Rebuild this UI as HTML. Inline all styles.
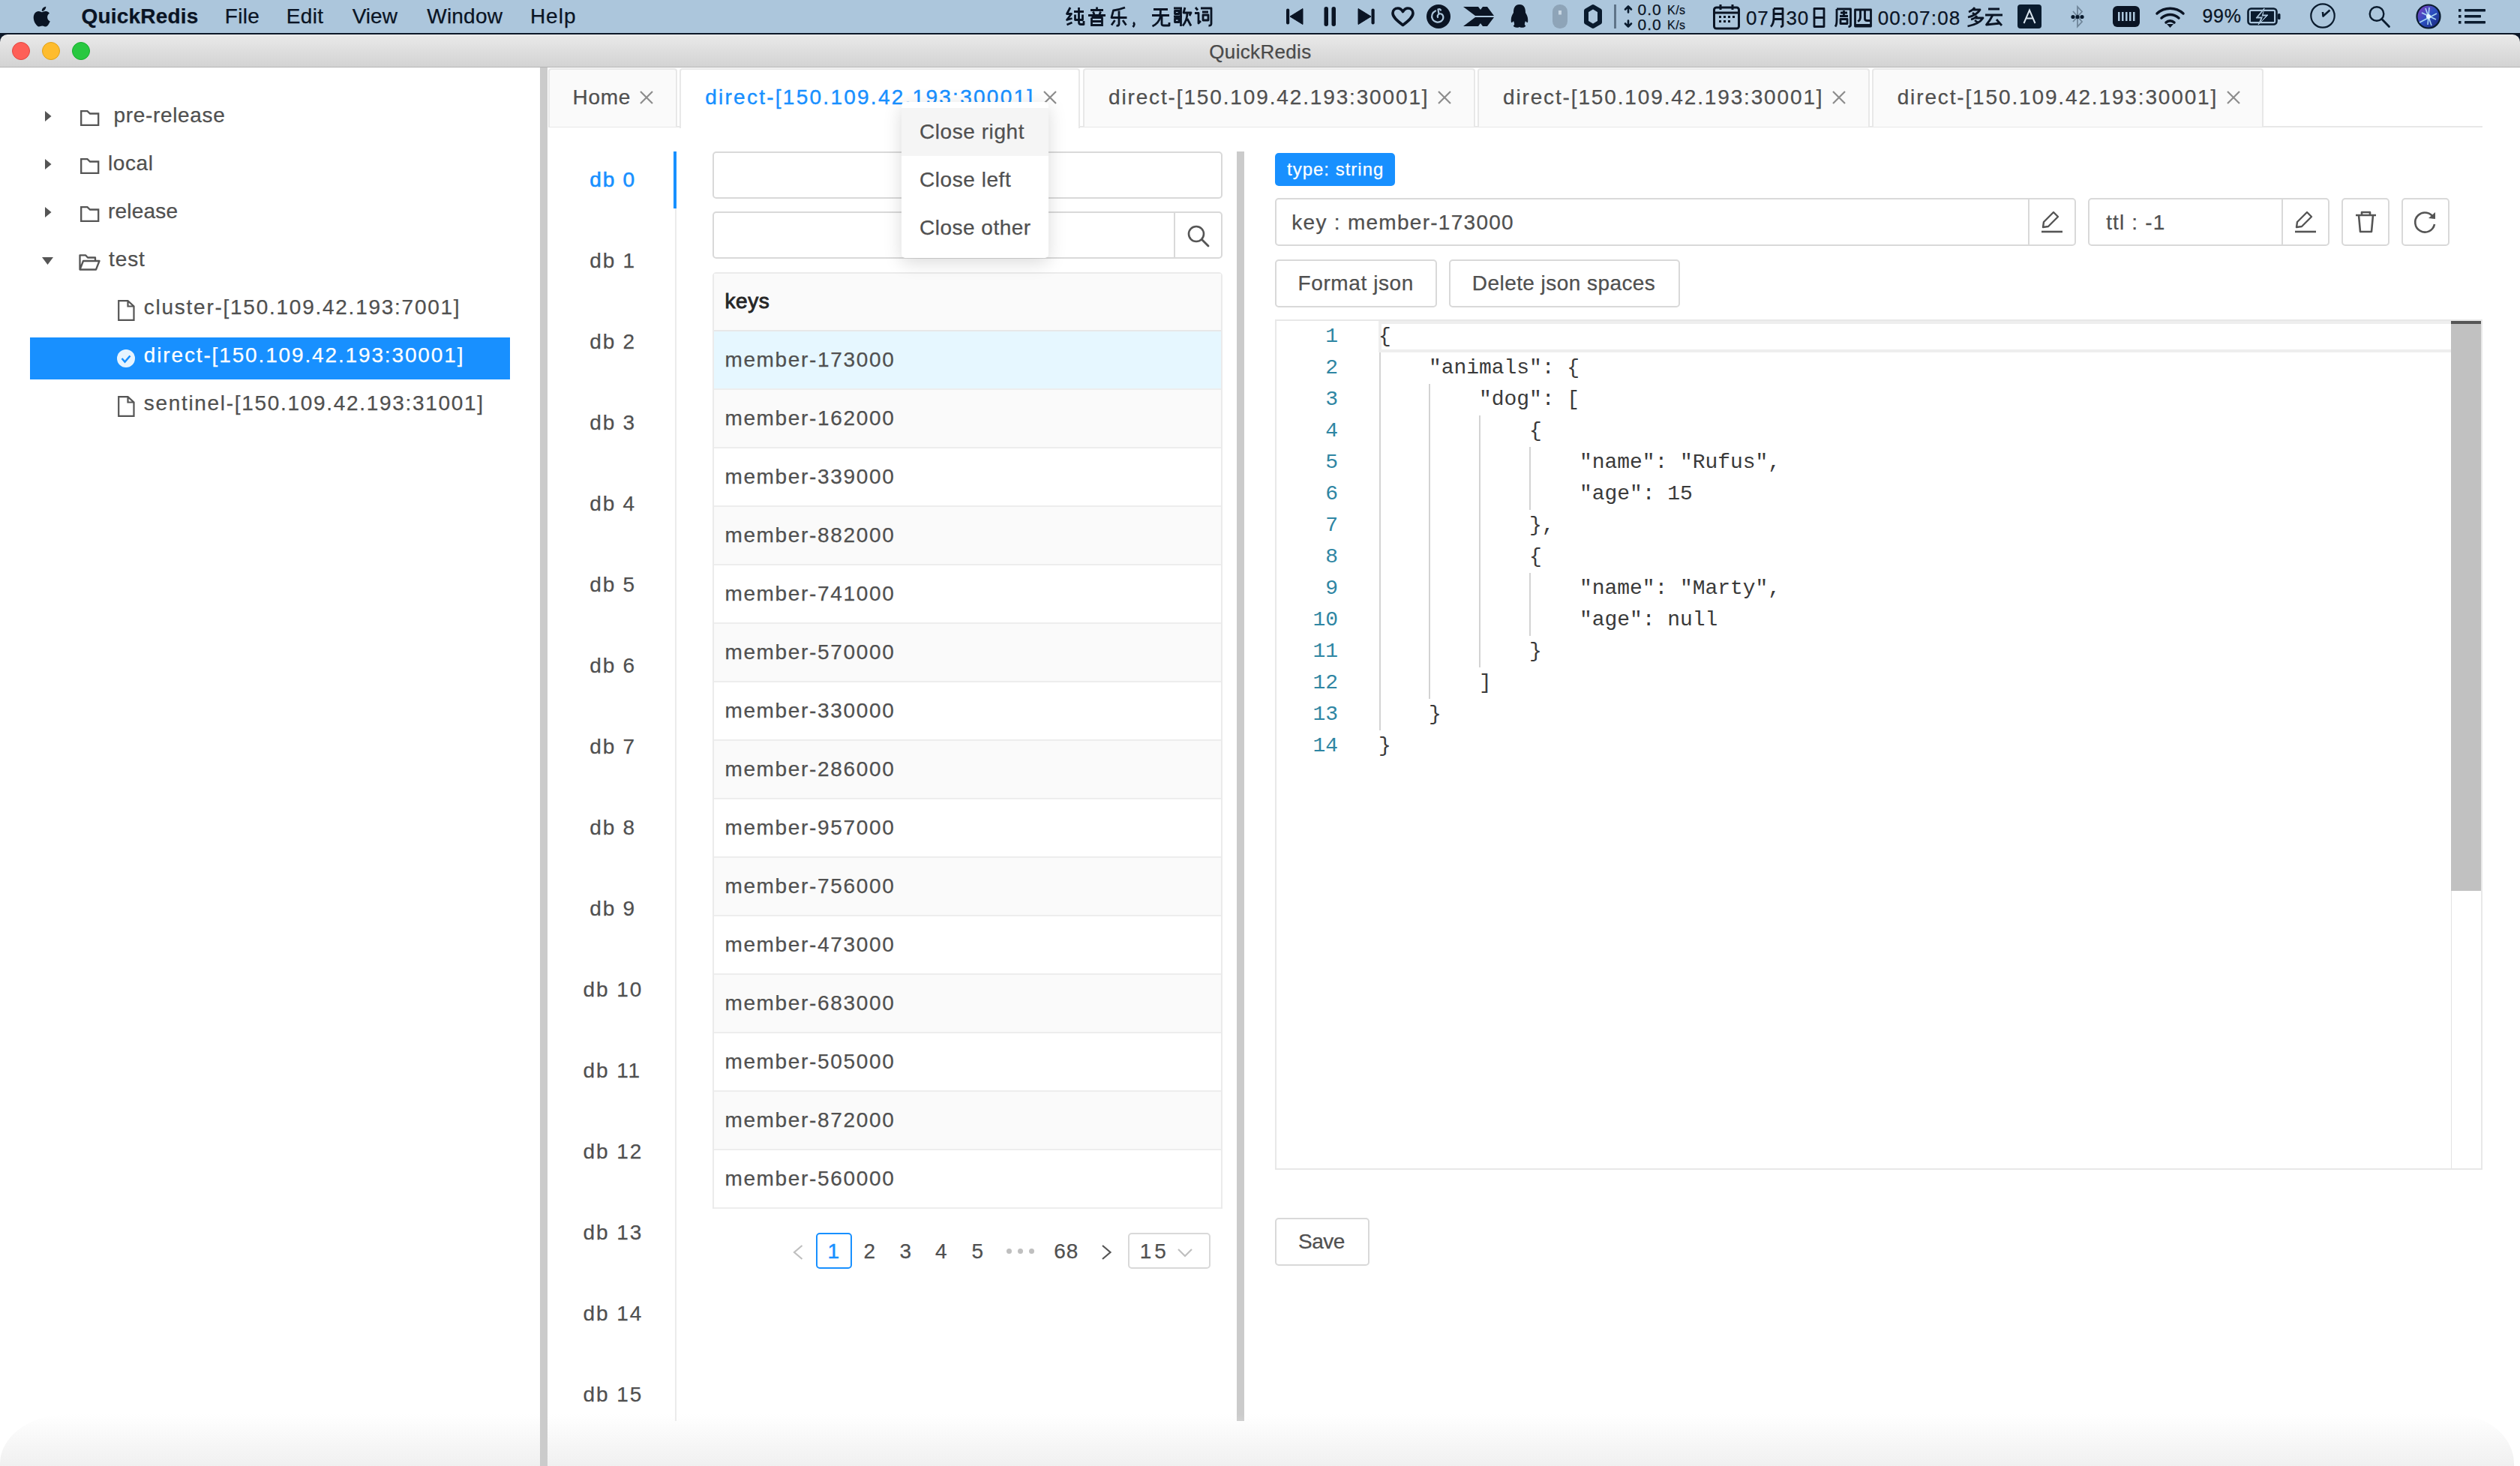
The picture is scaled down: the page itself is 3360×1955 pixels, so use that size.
<!DOCTYPE html>
<html><head><meta charset="utf-8">
<style>
*{box-sizing:border-box;margin:0;padding:0}
html,body{width:3360px;height:1955px;overflow:hidden;background:#fff;font-family:"Liberation Sans",sans-serif;color:#505050}
.a{position:absolute}
.t{position:absolute;white-space:pre;line-height:1;-webkit-text-stroke:0.25px currentColor}
svg{overflow:visible}
</style></head><body>

<div class="a" style="left:0px;top:0px;width:3360px;height:44px;background:#acc6dc"></div>
<div class="a" style="left:0px;top:44px;width:3360px;height:2px;background:#0d1828"></div>
<div class="t" style="left:108.4px;top:8.0px;font-size:28px;color:#0a1424;letter-spacing:0.222px;font-weight:bold;">QuickRedis</div>
<div class="t" style="left:299.8px;top:8.0px;font-size:28px;color:#0a1424;letter-spacing:0.333px;font-weight:normal;">File</div>
<div class="t" style="left:381.8px;top:8.0px;font-size:28px;color:#0a1424;letter-spacing:0.333px;font-weight:normal;">Edit</div>
<div class="t" style="left:469.7px;top:8.0px;font-size:28px;color:#0a1424;letter-spacing:0.0px;font-weight:normal;">View</div>
<div class="t" style="left:569.3px;top:8.0px;font-size:28px;color:#0a1424;letter-spacing:0.2px;font-weight:normal;">Window</div>
<div class="t" style="left:706.9px;top:8.0px;font-size:28px;color:#0a1424;letter-spacing:1.0px;font-weight:normal;">Help</div>
<svg class="a" style="left:41px;top:3px" width="28" height="33" viewBox="0 0 28 33"><path fill="#0a1424" d="M20.5 17.6c0-3.2 2.6-4.7 2.7-4.8-1.5-2.2-3.8-2.5-4.6-2.5-2-.2-3.8 1.1-4.8 1.1-1 0-2.5-1.1-4.1-1.1-2.1 0-4.1 1.2-5.2 3.1-2.2 3.8-.6 9.5 1.6 12.6 1.1 1.5 2.3 3.2 4 3.2 1.6-.1 2.2-1 4.1-1 1.9 0 2.5 1 4.1 1 1.7 0 2.8-1.6 3.8-3.1 1.2-1.8 1.7-3.5 1.7-3.6-.1 0-3.3-1.3-3.3-4.9zM17.4 8.3c.9-1.1 1.5-2.5 1.3-4-1.3.1-2.8.9-3.700 1.9-.8.9-1.5 2.400-1.3 3.900 1.4.1 2.800-.7 3.700-1.8z" transform="translate(0,1) scale(1.08)"/></svg>
<svg class="a" style="left:1421px;top:9px" width="25" height="26" viewBox="0 0 25 26"><path d="M6 1 L1.5 9.5 H7.5 L1.5 17.5 L8.5 15.5 M1.5 24 L8.5 21 M11 6.5 H24 M17.5 1 V21 Q17.5 23.5 20.5 23.5 H24 V19 M12.5 10.5 V17.5 H22.5 V10.5" fill="none" stroke="#0a1424" stroke-width="2.8" stroke-linejoin="round"/></svg>
<svg class="a" style="left:1450px;top:9px" width="25" height="26" viewBox="0 0 25 26"><path d="M12.5 0.5 V3.5 M4 4.5 H21 M7.5 6.5 L9 10.5 M17.5 6.5 L16 10.5 M1 11.5 H24 M5.5 14.5 V26 M5.5 14.5 H19.5 V26 M5.5 19.5 H19.5 M5.5 24.5 H19.5" fill="none" stroke="#0a1424" stroke-width="2.8" stroke-linejoin="round"/></svg>
<svg class="a" style="left:1479px;top:9px" width="25" height="26" viewBox="0 0 25 26"><path d="M21 1 Q13 4 5.5 5 L3 14.5 H23.5 M13 5.5 V23 Q13 26 9.5 25 M7.5 18 L3 24.5 M18 18 L22.5 24.5" fill="none" stroke="#0a1424" stroke-width="2.8" stroke-linejoin="round"/></svg>
<svg class="a" style="left:1508px;top:9px" width="25" height="26" viewBox="0 0 25 26"><path d="M3 21 Q6 23 2.5 27" fill="none" stroke="#0a1424" stroke-width="2.8" stroke-linejoin="round"/></svg>
<svg class="a" style="left:1535px;top:9px" width="25" height="26" viewBox="0 0 25 26"><path d="M3 3.5 H22 M1 11.5 H24 M12.5 3.5 L12 14 Q10 22 1.5 26 M14 13 V23 Q14 25 17 25 H24 V21" fill="none" stroke="#0a1424" stroke-width="2.8" stroke-linejoin="round"/></svg>
<svg class="a" style="left:1564px;top:9px" width="25" height="26" viewBox="0 0 25 26"><path d="M1 2 H12 M2.5 5.5 H8 V9.5 H2.5Z M1 13 H12 M2.5 16 H8 V20.5 H2.5Z M10.5 2 V26 M16 1 L14 8 H24 L22 12 M19 8 Q19 18 13 25.5 M19 16 L24 25.5" fill="none" stroke="#0a1424" stroke-width="2.8" stroke-linejoin="round"/></svg>
<svg class="a" style="left:1592px;top:9px" width="25" height="26" viewBox="0 0 25 26"><path d="M2 1 L5 4.5 M1 8.5 H6 V22 L9 19 M9 2 H23 V22.5 Q23 25.5 19.5 25 M11 7 H19 M12 11 H19 V18 H12Z" fill="none" stroke="#0a1424" stroke-width="2.8" stroke-linejoin="round"/></svg>
<svg class="a" style="left:1714px;top:11px" width="24" height="22" viewBox="0 0 24 22"><rect x="1" y="0.5" width="4.2" height="21" rx="2" fill="#0a1424"/><path d="M23 0.5 L6 11 L23 21.5Z" fill="#0a1424" stroke="#0a1424" stroke-width="1" stroke-linejoin="round"/></svg>
<svg class="a" style="left:1765px;top:9px" width="17" height="26" viewBox="0 0 17 26"><rect x="0.5" y="0" width="5.5" height="26" rx="2.7" fill="#0a1424"/><rect x="10.5" y="0" width="5.5" height="26" rx="2.7" fill="#0a1424"/></svg>
<svg class="a" style="left:1810px;top:11px" width="24" height="22" viewBox="0 0 24 22"><path d="M1 0.5 L18 11 L1 21.5Z" fill="#0a1424" stroke="#0a1424" stroke-width="1" stroke-linejoin="round"/><rect x="18.5" y="0.5" width="4.2" height="21" rx="2" fill="#0a1424"/></svg>
<svg class="a" style="left:1855px;top:9px" width="31" height="27" viewBox="0 0 31 27"><path d="M15.5 24.5 C7 18 2 13.5 2 8.5 C2 4.5 5 2 8.8 2 C11.8 2 14 4 15.5 6.5 C17 4 19.2 2 22.2 2 C26 2 29 4.5 29 8.5 C29 13.5 24 18 15.5 24.5Z" fill="none" stroke="#0a1424" stroke-width="3.6" stroke-linejoin="round"/></svg>
<svg class="a" style="left:1902px;top:6px" width="32" height="32" viewBox="0 0 32 32"><circle cx="16" cy="16" r="16" fill="#0a1424"/><path d="M12 8.5 C7.5 10.5 6 15.5 8 19.5 C10 23.5 16 25 20 22 C23.5 19 23 14 19.5 12.5 C16.5 11.5 14 14 15 17 M16.5 13 L15.5 6.5 C17 6 18.5 6.5 19 7.5" fill="none" stroke="#acc6dc" stroke-width="2.2" stroke-linecap="round"/></svg>
<svg class="a" style="left:1951px;top:9px" width="41" height="26" viewBox="0 0 41 26"><path d="M0 0 H20 L23 4 L26 0 H32 L41 12 H16 Z M16 14 H41 L32 26 H26 L23 22 L20 26 H0 Z" fill="#0a1424"/></svg>
<svg class="a" style="left:2013px;top:6px" width="26" height="32" viewBox="0 0 26 32"><path d="M13 0 C6 0 5 6 5 11 C3 14 1 18 2 24 C4 24 5 22 5 22 C6 25 7 27 5 28 C4 30 9 32 13 30 C17 32 22 30 21 28 C19 27 20 25 21 22 C21 22 22 24 24 24 C25 18 23 14 21 11 C21 6 20 0 13 0Z" fill="#0a1424"/></svg>
<svg class="a" style="left:2070px;top:6px" width="20" height="32" viewBox="0 0 20 32"><rect x="0" y="0" width="20" height="32" rx="9.5" fill="#8ea4b8"/><rect x="8" y="8" width="4" height="5.5" fill="#c8d6e3"/></svg>
<svg class="a" style="left:2112px;top:6px" width="24" height="32" viewBox="0 0 24 32"><path d="M12 3 L21 8.3 V23.7 L12 29 L3 23.7 V8.3Z" fill="none" stroke="#0a1b2e" stroke-width="6" stroke-linejoin="round"/></svg>
<div class="a" style="left:2152px;top:6px;width:3px;height:32px;background:#5f7488"></div>
<svg class="a" style="left:2165px;top:7px" width="12" height="30" viewBox="0 0 12 30"><path d="M6 1.5 L2 5.5 M6 1.5 L10 5.5 M6 1.5 V9.5 M6 28.5 L2 24.5 M6 28.5 L10 24.5 M6 28.5 V20.5" stroke="#0a1b2e" stroke-width="2.6" fill="none" stroke-linecap="round"/></svg>
<div class="t" style="left:2183.6px;top:1.8px;font-size:21px;color:#0a1424;letter-spacing:0.9px;font-weight:normal;">0.0</div>
<div class="t" style="left:2223.0px;top:6.1px;font-size:16px;color:#0a1424;letter-spacing:0.5px;font-weight:normal;">K/s</div>
<div class="t" style="left:2183.6px;top:21.5px;font-size:21px;color:#0a1424;letter-spacing:0.9px;font-weight:normal;">0.0</div>
<div class="t" style="left:2223.0px;top:25.8px;font-size:16px;color:#0a1424;letter-spacing:0.5px;font-weight:normal;">K/s</div>
<svg class="a" style="left:2284px;top:5px" width="36" height="35" viewBox="0 0 36 35"><rect x="1.5" y="5" width="33" height="28" rx="3" fill="none" stroke="#0a1424" stroke-width="3"/><path d="M10 1 V8 M26 1 V8 M2 12 H34" stroke="#0a1424" stroke-width="3"/><g fill="#0a1424"><rect x="8" y="16" width="3" height="3"/><rect x="14" y="16" width="3" height="3"/><rect x="20" y="16" width="3" height="3"/><rect x="26" y="16" width="3" height="3"/><rect x="8" y="22" width="3" height="3"/><rect x="14" y="22" width="3" height="3"/><rect x="20" y="22" width="3" height="3"/></g></svg>
<div class="t" style="left:2328.0px;top:10.5px;font-size:26px;color:#0a1424;letter-spacing:0.8px;font-weight:normal;">07</div>
<svg class="a" style="left:2360px;top:10px" width="19" height="25" viewBox="0 0 19 25"><path d="M5 1.5 V14 Q5 22 1 25.5 M5 1.5 H17 V23.5 Q17 25.5 14 25.5 M5 8.5 H17 M5 15.5 H17" fill="none" stroke="#0a1424" stroke-width="2.8" stroke-linejoin="round"/></svg>
<div class="t" style="left:2381.6px;top:10.5px;font-size:26px;color:#0a1424;letter-spacing:0.8px;font-weight:normal;">30</div>
<svg class="a" style="left:2417px;top:10px" width="17" height="25" viewBox="0 0 17 25"><path d="M2 1.5 H15 V25.5 H2Z M2 13.5 H15" fill="none" stroke="#0a1424" stroke-width="2.8" stroke-linejoin="round"/></svg>
<svg class="a" style="left:2446px;top:10px" width="23" height="25" viewBox="0 0 23 25"><path d="M3 2 V17 Q3 23 1 25.5 M3 2 H21.5 V23.5 Q21.5 25.5 18.5 25.5 M8 7 H17 M12.5 4 V11 M7 11.5 H18 M8 15.5 H17 V21.5 H8Z" fill="none" stroke="#0a1424" stroke-width="2.8" stroke-linejoin="round"/></svg>
<svg class="a" style="left:2472px;top:10px" width="24" height="25" viewBox="0 0 24 25"><path d="M1.5 3 H22.5 V25 H1.5Z M8.5 3 V13 Q8.5 17 5 18.5 M14.5 3 V15 Q14.5 17.5 17.5 17.5 H22.5 M1.5 23.5 H22.5" fill="none" stroke="#0a1424" stroke-width="2.8" stroke-linejoin="round"/></svg>
<div class="t" style="left:2503.7px;top:10.5px;font-size:26px;color:#0a1424;letter-spacing:1.2px;font-weight:normal;">00:07:08</div>
<svg class="a" style="left:2622px;top:9px" width="22" height="26" viewBox="0 0 22 26"><path d="M11 1 Q8 5 3 7 M9 4 H18 Q14 11 2 14 M8 8 L12 11 M14 12 Q11 16 6 17 M12 15 H22 Q17 23 1.5 26 M11 18 L15 21" fill="none" stroke="#0a1424" stroke-width="2.8" stroke-linejoin="round"/></svg>
<svg class="a" style="left:2646px;top:9px" width="24" height="26" viewBox="0 0 24 26"><path d="M5 3 H20 M1 11 H24 M11 11 Q7 19 2.5 24 L21 22 M16 17 L23 25" fill="none" stroke="#0a1424" stroke-width="2.8" stroke-linejoin="round"/></svg>
<svg class="a" style="left:2690px;top:6px" width="32" height="32" viewBox="0 0 32 32"><rect width="32" height="32" rx="4" fill="#0a1b2e"/><path d="M8.5 25 L16 7.5 L23.5 25 M11.3 18.5 H20.7" stroke="#d8e4ee" stroke-width="2" fill="none"/></svg>
<svg class="a" style="left:2761px;top:7px" width="24" height="32" viewBox="0 0 24 32"><path d="M3 8 L15 22 L9 28.5 V2 L15 8.5 L3 22" stroke="#6f8599" stroke-width="1.8" fill="none"/><circle cx="3" cy="15.5" r="2.6" fill="#0a1b2e"/><circle cx="9" cy="15.5" r="2.6" fill="#0a1b2e"/><circle cx="15" cy="15.5" r="2.6" fill="#0a1b2e"/></svg>
<svg class="a" style="left:2817px;top:8px" width="36" height="28" viewBox="0 0 36 28"><rect width="36" height="28" rx="6" fill="#0a1424"/><g fill="#acc6dc"><rect x="7" y="8" width="2.5" height="12"/><rect x="12" y="8" width="2.5" height="12"/><rect x="17" y="8" width="2.5" height="12"/><rect x="22" y="8" width="2.5" height="12"/><rect x="27" y="8" width="2.5" height="12"/></g></svg>
<svg class="a" style="left:2873px;top:7px" width="41" height="30" viewBox="0 0 41 30"><path d="M3 11 C13 2 28 2 38 11 M9 17 C16 11 25 11 32 17 M15 23 C18 20 23 20 26 23" stroke="#0a1424" stroke-width="3.5" fill="none" stroke-linecap="round"/><path d="M20.5 30 L16 25 H25Z" fill="#0a1424"/></svg>
<div class="t" style="left:2936.4px;top:9.0px;font-size:25px;color:#0a1424;letter-spacing:0.8px;font-weight:normal;">99%</div>
<svg class="a" style="left:2996px;top:10px" width="46" height="24" viewBox="0 0 46 24"><rect x="1.5" y="1.5" width="38" height="21" rx="4" fill="none" stroke="#0a1b2e" stroke-width="2.6"/><rect x="41" y="8" width="3.5" height="8" rx="1.5" fill="#0a1b2e"/><rect x="5" y="5" width="31" height="14" fill="#0a1b2e"/><path d="M23 1 L12 14 H19 L15 23 L28 10 H21Z" fill="#acc6dc" stroke="#acc6dc" stroke-width="1"/><path d="M22 4 L15 12.5 H21 L18.5 19 L25 11.5 H19.5Z" fill="#0a1b2e"/></svg>
<svg class="a" style="left:3080px;top:4px" width="34" height="34" viewBox="0 0 34 34"><circle cx="17" cy="17" r="15.7" fill="none" stroke="#0a1b2e" stroke-width="2.2"/><path d="M26.5 9.5 L17.5 17.5 L17 12" stroke="#0a1b2e" stroke-width="2.6" fill="none" stroke-linejoin="round"/></svg>
<svg class="a" style="left:3158px;top:8px" width="30" height="30" viewBox="0 0 30 30"><circle cx="11" cy="10.5" r="9.3" fill="none" stroke="#0a1b2e" stroke-width="2.4"/><path d="M17.8 17.5 L27.5 27.5" stroke="#0a1b2e" stroke-width="2.8" stroke-linecap="round"/></svg>
<svg class="a" style="left:3221px;top:5px" width="34" height="34" viewBox="0 0 34 34"><defs><linearGradient id="sg" x1="0" y1="0" x2="1" y2="1"><stop offset="0" stop-color="#8e3fc2"/><stop offset="0.5" stop-color="#2a4fc0"/><stop offset="1" stop-color="#1a2070"/></linearGradient></defs><circle cx="17" cy="17" r="15.5" fill="url(#sg)" stroke="#0a1b2e" stroke-width="2.2"/><path d="M5 25 L28 13 M13 6 L21 29 M8 12 L27 21 M18 5 L16 28" stroke="#bfefff" stroke-width="1.6" opacity="0.85"/><circle cx="17" cy="17" r="3" fill="#e8f6ff"/></svg>
<svg class="a" style="left:3278px;top:11px" width="37" height="22" viewBox="0 0 37 22"><g fill="#0a1b2e"><rect x="0" y="1" width="3.5" height="3.6"/><rect x="0" y="9" width="3.5" height="3.6"/><rect x="0" y="17" width="3.5" height="3.6"/><rect x="8" y="1" width="28" height="3.6" rx="0.8"/><rect x="8" y="9" width="22" height="3.6" rx="0.8"/><rect x="8" y="17" width="28" height="3.6" rx="0.8"/></g></svg>
<div class="a" style="left:0px;top:46px;width:3360px;height:14px;background:#0d1828"></div>
<div class="a" style="left:0px;top:46px;width:3360px;height:43px;background:linear-gradient(#e9e9e9,#d3d3d3);border-top:1px solid #f4f4f4;border-radius:10px 10px 0 0"></div>
<div class="a" style="left:0px;top:89px;width:3360px;height:1px;background:#b3b3b3"></div>
<div class="a" style="left:16px;top:56px;width:24px;height:24px;border-radius:50%;background:#fe5f57;border:1px solid #e2463f"></div>
<div class="a" style="left:56px;top:56px;width:24px;height:24px;border-radius:50%;background:#febc2e;border:1px solid #e1a116"></div>
<div class="a" style="left:96px;top:56px;width:24px;height:24px;border-radius:50%;background:#28c840;border:1px solid #14ae2a"></div>
<div class="t" style="left:1612.3px;top:56.0px;font-size:26px;color:#4a4a4a;letter-spacing:0.333px;font-weight:normal;">QuickRedis</div>
<div class="a" style="left:40px;top:450px;width:640px;height:56px;background:#1890ff"></div>
<div class="t" style="left:151.6px;top:140.3px;font-size:28px;color:#505050;letter-spacing:0.65px;font-weight:normal;">pre-release</div>
<svg class="a" style="left:60px;top:148px" width="9" height="14" viewBox="0 0 9 14"><path d="M0 0 L8.5 7 L0 14Z" fill="#555"/></svg>
<svg class="a" style="left:107px;top:147px" width="26" height="21" viewBox="0 0 26 21"><path d="M1.2 1.2 H9.5 L13 4.5 H24.2 V19.8 H1.2Z" fill="none" stroke="#555" stroke-width="2.3"/></svg>
<div class="t" style="left:143.9px;top:204.3px;font-size:28px;color:#505050;letter-spacing:0.6px;font-weight:normal;">local</div>
<svg class="a" style="left:60px;top:212px" width="9" height="14" viewBox="0 0 9 14"><path d="M0 0 L8.5 7 L0 14Z" fill="#555"/></svg>
<svg class="a" style="left:107px;top:211px" width="26" height="21" viewBox="0 0 26 21"><path d="M1.2 1.2 H9.5 L13 4.5 H24.2 V19.8 H1.2Z" fill="none" stroke="#555" stroke-width="2.3"/></svg>
<div class="t" style="left:143.9px;top:268.3px;font-size:28px;color:#505050;letter-spacing:0.217px;font-weight:normal;">release</div>
<svg class="a" style="left:60px;top:276px" width="9" height="14" viewBox="0 0 9 14"><path d="M0 0 L8.5 7 L0 14Z" fill="#555"/></svg>
<svg class="a" style="left:107px;top:275px" width="26" height="21" viewBox="0 0 26 21"><path d="M1.2 1.2 H9.5 L13 4.5 H24.2 V19.8 H1.2Z" fill="none" stroke="#555" stroke-width="2.3"/></svg>
<div class="t" style="left:145.0px;top:332.3px;font-size:28px;color:#505050;letter-spacing:0.9px;font-weight:normal;">test</div>
<svg class="a" style="left:56px;top:343px" width="15" height="10" viewBox="0 0 15 10"><path d="M0 0 H15 L7.5 10Z" fill="#555"/></svg>
<svg class="a" style="left:105px;top:339px" width="29" height="22" viewBox="0 0 29 22"><path d="M1.5 20.5 V1.3 H9 L12 4.5 H22 V9 M1.5 20.5 L6 9 H27.5 L23 20.5Z" fill="none" stroke="#555" stroke-width="2.3" stroke-linejoin="round"/></svg>
<div class="t" style="left:191.8px;top:396.3px;font-size:28px;color:#505050;letter-spacing:1.743px;font-weight:normal;">cluster-[150.109.42.193:7001]</div>
<svg class="a" style="left:157px;top:400px" width="23" height="28" viewBox="0 0 23 28"><path d="M1.2 1.2 H13.5 L21.5 8.5 V26.8 H1.2Z M13.5 1.2 V8.5 H21.5" fill="none" stroke="#555" stroke-width="2.2"/></svg>
<div class="t" style="left:191.8px;top:460.3px;font-size:28px;color:#fff;letter-spacing:1.857px;font-weight:normal;">direct-[150.109.42.193:30001]</div>
<svg class="a" style="left:156px;top:466px" width="24" height="24" viewBox="0 0 24 24"><circle cx="12" cy="12" r="12" fill="#e6f4ff"/><path d="M6.5 12 L10.5 16.5 L17.5 8.5" fill="none" stroke="#1890ff" stroke-width="2.6"/></svg>
<div class="t" style="left:191.8px;top:524.3px;font-size:28px;color:#505050;letter-spacing:1.683px;font-weight:normal;">sentinel-[150.109.42.193:31001]</div>
<svg class="a" style="left:157px;top:528px" width="23" height="28" viewBox="0 0 23 28"><path d="M1.2 1.2 H13.5 L21.5 8.5 V26.8 H1.2Z M13.5 1.2 V8.5 H21.5" fill="none" stroke="#555" stroke-width="2.2"/></svg>
<div class="a" style="left:731px;top:168px;width:2579px;height:2px;background:#e8e8e8"></div>
<div class="a" style="left:731px;top:91px;width:172px;height:78px;background:#fafafa;border:2px solid #e8e8e8;border-bottom:none;border-radius:4px 4px 0 0"></div>
<div class="a" style="left:906px;top:91px;width:534px;height:80px;background:#fff;border:2px solid #e8e8e8;border-bottom:none;border-radius:4px 4px 0 0"></div>
<div class="a" style="left:1444px;top:91px;width:523px;height:78px;background:#fafafa;border:2px solid #e8e8e8;border-bottom:none;border-radius:4px 4px 0 0"></div>
<div class="a" style="left:1970px;top:91px;width:523px;height:78px;background:#fafafa;border:2px solid #e8e8e8;border-bottom:none;border-radius:4px 4px 0 0"></div>
<div class="a" style="left:2496px;top:91px;width:522px;height:78px;background:#fafafa;border:2px solid #e8e8e8;border-bottom:none;border-radius:4px 4px 0 0"></div>
<div class="t" style="left:763.6px;top:116.3px;font-size:28px;color:#505050;letter-spacing:0.667px;font-weight:normal;">Home</div>
<div class="t" style="left:940.2px;top:116.3px;font-size:28px;color:#1890ff;letter-spacing:2.26px;font-weight:normal;-webkit-text-stroke:0.4px #1890ff">direct-[150.109.42.193:30001]</div>
<div class="t" style="left:1478.0px;top:116.3px;font-size:28px;color:#505050;letter-spacing:1.857px;font-weight:normal;">direct-[150.109.42.193:30001]</div>
<div class="t" style="left:2004.0px;top:116.3px;font-size:28px;color:#505050;letter-spacing:1.857px;font-weight:normal;">direct-[150.109.42.193:30001]</div>
<div class="t" style="left:2529.7px;top:116.3px;font-size:28px;color:#505050;letter-spacing:1.857px;font-weight:normal;">direct-[150.109.42.193:30001]</div>
<svg class="a" style="left:853px;top:121px" width="18" height="18" viewBox="0 0 18 18"><path d="M1 1 L17 17 M17 1 L1 17" stroke="#8c8c8c" stroke-width="2.2"/></svg>
<svg class="a" style="left:1391px;top:121px" width="18" height="18" viewBox="0 0 18 18"><path d="M1 1 L17 17 M17 1 L1 17" stroke="#8c8c8c" stroke-width="2.2"/></svg>
<svg class="a" style="left:1917px;top:121px" width="18" height="18" viewBox="0 0 18 18"><path d="M1 1 L17 17 M17 1 L1 17" stroke="#8c8c8c" stroke-width="2.2"/></svg>
<svg class="a" style="left:2443px;top:121px" width="18" height="18" viewBox="0 0 18 18"><path d="M1 1 L17 17 M17 1 L1 17" stroke="#8c8c8c" stroke-width="2.2"/></svg>
<svg class="a" style="left:2969px;top:121px" width="18" height="18" viewBox="0 0 18 18"><path d="M1 1 L17 17 M17 1 L1 17" stroke="#8c8c8c" stroke-width="2.2"/></svg>
<div class="a" style="left:900px;top:202px;width:2px;height:1693px;background:#ebebeb"></div>
<div class="a" style="left:898px;top:202px;width:4px;height:76px;background:#1890ff"></div>
<div class="t" style="left:786.3px;top:226.3px;font-size:28px;color:#1890ff;letter-spacing:1.767px;font-weight:normal;-webkit-text-stroke:0.6px #1890ff">db 0</div>
<div class="t" style="left:786.3px;top:334.3px;font-size:28px;color:#505050;letter-spacing:1.767px;font-weight:normal;">db 1</div>
<div class="t" style="left:786.3px;top:442.3px;font-size:28px;color:#505050;letter-spacing:1.767px;font-weight:normal;">db 2</div>
<div class="t" style="left:786.3px;top:550.3px;font-size:28px;color:#505050;letter-spacing:1.767px;font-weight:normal;">db 3</div>
<div class="t" style="left:786.3px;top:658.3px;font-size:28px;color:#505050;letter-spacing:1.767px;font-weight:normal;">db 4</div>
<div class="t" style="left:786.3px;top:766.3px;font-size:28px;color:#505050;letter-spacing:1.767px;font-weight:normal;">db 5</div>
<div class="t" style="left:786.3px;top:874.3px;font-size:28px;color:#505050;letter-spacing:1.767px;font-weight:normal;">db 6</div>
<div class="t" style="left:786.3px;top:982.3px;font-size:28px;color:#505050;letter-spacing:1.767px;font-weight:normal;">db 7</div>
<div class="t" style="left:786.3px;top:1090.3px;font-size:28px;color:#505050;letter-spacing:1.767px;font-weight:normal;">db 8</div>
<div class="t" style="left:786.3px;top:1198.3px;font-size:28px;color:#505050;letter-spacing:1.767px;font-weight:normal;">db 9</div>
<div class="t" style="left:777.4px;top:1306.3px;font-size:28px;color:#505050;letter-spacing:1.95px;font-weight:normal;">db 10</div>
<div class="t" style="left:777.4px;top:1414.3px;font-size:28px;color:#505050;letter-spacing:1.95px;font-weight:normal;">db 11</div>
<div class="t" style="left:777.4px;top:1522.3px;font-size:28px;color:#505050;letter-spacing:1.95px;font-weight:normal;">db 12</div>
<div class="t" style="left:777.4px;top:1630.3px;font-size:28px;color:#505050;letter-spacing:1.95px;font-weight:normal;">db 13</div>
<div class="t" style="left:777.4px;top:1738.3px;font-size:28px;color:#505050;letter-spacing:1.95px;font-weight:normal;">db 14</div>
<div class="t" style="left:777.4px;top:1846.3px;font-size:28px;color:#505050;letter-spacing:1.95px;font-weight:normal;">db 15</div>
<div class="a" style="left:950px;top:202px;width:680px;height:63px;background:#fff;border:2px solid #d9d9d9;border-radius:5px"></div>
<div class="a" style="left:950px;top:282px;width:680px;height:63px;background:#fff;border:2px solid #d9d9d9;border-radius:5px"></div>
<div class="a" style="left:1565px;top:282px;width:2px;height:63px;background:#d9d9d9"></div>
<svg class="a" style="left:1583px;top:300px" width="30" height="29" viewBox="0 0 30 29"><circle cx="12" cy="12" r="10" fill="none" stroke="#555" stroke-width="2.6"/><path d="M19.5 19.5 L28 28" stroke="#555" stroke-width="2.8" stroke-linecap="round"/></svg>
<div class="a" style="left:950px;top:363px;width:680px;height:1249px;border:2px solid #ebebeb;border-radius:5px 5px 0 0;background:#fff"></div>
<div class="a" style="left:952px;top:365px;width:676px;height:75px;background:#fafafa"></div>
<div class="a" style="left:952px;top:440px;width:676px;height:2px;background:#e8e8e8"></div>
<div class="t" style="left:966.4px;top:388.3px;font-size:28px;color:#262626;letter-spacing:0.6px;font-weight:normal;-webkit-text-stroke:0.9px #262626">keys</div>
<div class="a" style="left:952px;top:442px;width:676px;height:76px;background:#e6f7ff"></div>
<div class="a" style="left:952px;top:518px;width:676px;height:2px;background:#ededed"></div>
<div class="t" style="left:966.4px;top:466.3px;font-size:28px;color:#505050;letter-spacing:1.667px;font-weight:normal;">member-173000</div>
<div class="a" style="left:952px;top:520px;width:676px;height:76px;background:#fafafa"></div>
<div class="a" style="left:952px;top:596px;width:676px;height:2px;background:#ededed"></div>
<div class="t" style="left:966.4px;top:544.3px;font-size:28px;color:#505050;letter-spacing:1.667px;font-weight:normal;">member-162000</div>
<div class="a" style="left:952px;top:598px;width:676px;height:76px;background:#fff"></div>
<div class="a" style="left:952px;top:674px;width:676px;height:2px;background:#ededed"></div>
<div class="t" style="left:966.4px;top:622.3px;font-size:28px;color:#505050;letter-spacing:1.667px;font-weight:normal;">member-339000</div>
<div class="a" style="left:952px;top:676px;width:676px;height:76px;background:#fafafa"></div>
<div class="a" style="left:952px;top:752px;width:676px;height:2px;background:#ededed"></div>
<div class="t" style="left:966.4px;top:700.3px;font-size:28px;color:#505050;letter-spacing:1.667px;font-weight:normal;">member-882000</div>
<div class="a" style="left:952px;top:754px;width:676px;height:76px;background:#fff"></div>
<div class="a" style="left:952px;top:830px;width:676px;height:2px;background:#ededed"></div>
<div class="t" style="left:966.4px;top:778.3px;font-size:28px;color:#505050;letter-spacing:1.667px;font-weight:normal;">member-741000</div>
<div class="a" style="left:952px;top:832px;width:676px;height:76px;background:#fafafa"></div>
<div class="a" style="left:952px;top:908px;width:676px;height:2px;background:#ededed"></div>
<div class="t" style="left:966.4px;top:856.3px;font-size:28px;color:#505050;letter-spacing:1.667px;font-weight:normal;">member-570000</div>
<div class="a" style="left:952px;top:910px;width:676px;height:76px;background:#fff"></div>
<div class="a" style="left:952px;top:986px;width:676px;height:2px;background:#ededed"></div>
<div class="t" style="left:966.4px;top:934.3px;font-size:28px;color:#505050;letter-spacing:1.667px;font-weight:normal;">member-330000</div>
<div class="a" style="left:952px;top:988px;width:676px;height:76px;background:#fafafa"></div>
<div class="a" style="left:952px;top:1064px;width:676px;height:2px;background:#ededed"></div>
<div class="t" style="left:966.4px;top:1012.3px;font-size:28px;color:#505050;letter-spacing:1.667px;font-weight:normal;">member-286000</div>
<div class="a" style="left:952px;top:1066px;width:676px;height:76px;background:#fff"></div>
<div class="a" style="left:952px;top:1142px;width:676px;height:2px;background:#ededed"></div>
<div class="t" style="left:966.4px;top:1090.3px;font-size:28px;color:#505050;letter-spacing:1.667px;font-weight:normal;">member-957000</div>
<div class="a" style="left:952px;top:1144px;width:676px;height:76px;background:#fafafa"></div>
<div class="a" style="left:952px;top:1220px;width:676px;height:2px;background:#ededed"></div>
<div class="t" style="left:966.4px;top:1168.3px;font-size:28px;color:#505050;letter-spacing:1.667px;font-weight:normal;">member-756000</div>
<div class="a" style="left:952px;top:1222px;width:676px;height:76px;background:#fff"></div>
<div class="a" style="left:952px;top:1298px;width:676px;height:2px;background:#ededed"></div>
<div class="t" style="left:966.4px;top:1246.3px;font-size:28px;color:#505050;letter-spacing:1.667px;font-weight:normal;">member-473000</div>
<div class="a" style="left:952px;top:1300px;width:676px;height:76px;background:#fafafa"></div>
<div class="a" style="left:952px;top:1376px;width:676px;height:2px;background:#ededed"></div>
<div class="t" style="left:966.4px;top:1324.3px;font-size:28px;color:#505050;letter-spacing:1.667px;font-weight:normal;">member-683000</div>
<div class="a" style="left:952px;top:1378px;width:676px;height:76px;background:#fff"></div>
<div class="a" style="left:952px;top:1454px;width:676px;height:2px;background:#ededed"></div>
<div class="t" style="left:966.4px;top:1402.3px;font-size:28px;color:#505050;letter-spacing:1.667px;font-weight:normal;">member-505000</div>
<div class="a" style="left:952px;top:1456px;width:676px;height:76px;background:#fafafa"></div>
<div class="a" style="left:952px;top:1532px;width:676px;height:2px;background:#ededed"></div>
<div class="t" style="left:966.4px;top:1480.3px;font-size:28px;color:#505050;letter-spacing:1.667px;font-weight:normal;">member-872000</div>
<div class="a" style="left:952px;top:1534px;width:676px;height:76px;background:#fff"></div>
<div class="a" style="left:952px;top:1610px;width:676px;height:2px;background:#ededed"></div>
<div class="t" style="left:966.4px;top:1558.3px;font-size:28px;color:#505050;letter-spacing:1.667px;font-weight:normal;">member-560000</div>
<svg class="a" style="left:1057px;top:1660px" width="14" height="20" viewBox="0 0 14 20"><path d="M12.5 1 L2 10 L12.5 19" fill="none" stroke="#bfbfbf" stroke-width="2.2"/></svg>
<div class="a" style="left:1088px;top:1644px;width:48px;height:48px;border:2px solid #1890ff;border-radius:5px;background:#fff"></div>
<div class="t" style="left:1103.5px;top:1654.5px;font-size:28px;color:#1890ff;letter-spacing:0px;font-weight:normal;-webkit-text-stroke:0.5px #1890ff">1</div>
<div class="t" style="left:1151.5px;top:1654.5px;font-size:28px;color:#505050;letter-spacing:0px;font-weight:normal;">2</div>
<div class="t" style="left:1199.5px;top:1654.5px;font-size:28px;color:#505050;letter-spacing:0px;font-weight:normal;">3</div>
<div class="t" style="left:1247.1px;top:1654.5px;font-size:28px;color:#505050;letter-spacing:0px;font-weight:normal;">4</div>
<div class="t" style="left:1295.5px;top:1654.5px;font-size:28px;color:#505050;letter-spacing:0px;font-weight:normal;">5</div>
<div class="a" style="left:1341.5px;top:1664.5px;width:7px;height:7px;border-radius:50%;background:#bfbfbf"></div>
<div class="a" style="left:1356.5px;top:1664.5px;width:7px;height:7px;border-radius:50%;background:#bfbfbf"></div>
<div class="a" style="left:1371.5px;top:1664.5px;width:7px;height:7px;border-radius:50%;background:#bfbfbf"></div>
<div class="t" style="left:1405.3px;top:1654.5px;font-size:28px;color:#505050;letter-spacing:1.0px;font-weight:normal;">68</div>
<svg class="a" style="left:1468px;top:1660px" width="15" height="20" viewBox="0 0 15 20"><path d="M2 1 L12.5 10 L2 19" fill="none" stroke="#555" stroke-width="2.2"/></svg>
<div class="a" style="left:1504px;top:1644px;width:110px;height:48px;border:2px solid #d9d9d9;border-radius:5px;background:#fff"></div>
<div class="t" style="left:1519.8px;top:1654.5px;font-size:28px;color:#505050;letter-spacing:4.0px;font-weight:normal;">15</div>
<svg class="a" style="left:1570px;top:1665px" width="20" height="12" viewBox="0 0 20 12"><path d="M1 1 L10 10 L19 1" fill="none" stroke="#bfbfbf" stroke-width="2.2"/></svg>
<div class="a" style="left:1649px;top:202px;width:10px;height:1693px;background:#cbcbcb"></div>
<div class="a" style="left:1700px;top:204px;width:160px;height:44px;background:#1890ff;border-radius:5px"></div>
<div class="t" style="left:1716.0px;top:214.0px;font-size:24px;color:#fff;letter-spacing:1.0px;font-weight:normal;">type: string</div>
<div class="a" style="left:1700px;top:264px;width:1068px;height:64px;border:2px solid #d9d9d9;border-radius:5px;background:#fff"></div>
<div class="a" style="left:2704px;top:264px;width:2px;height:64px;background:#d9d9d9"></div>
<div class="t" style="left:1722.3px;top:282.7px;font-size:28px;color:#505050;letter-spacing:1.278px;font-weight:normal;">key : member-173000</div>
<svg class="a" style="left:2721px;top:281px" width="30" height="30" viewBox="0 0 30 30"><path d="M3 22 L4 15 L17 2 L23 8 L10 21 Z" fill="none" stroke="#555" stroke-width="2.4" stroke-linejoin="round"/><path d="M1 28 H29" stroke="#555" stroke-width="2.6"/></svg>
<div class="a" style="left:2784px;top:264px;width:322px;height:64px;border:2px solid #d9d9d9;border-radius:5px;background:#fff"></div>
<div class="a" style="left:3042px;top:264px;width:2px;height:64px;background:#d9d9d9"></div>
<div class="t" style="left:2808.2px;top:282.7px;font-size:28px;color:#505050;letter-spacing:1.143px;font-weight:normal;">ttl : -1</div>
<svg class="a" style="left:3059px;top:281px" width="30" height="30" viewBox="0 0 30 30"><path d="M3 22 L4 15 L17 2 L23 8 L10 21 Z" fill="none" stroke="#555" stroke-width="2.4" stroke-linejoin="round"/><path d="M1 28 H29" stroke="#555" stroke-width="2.6"/></svg>
<div class="a" style="left:3122px;top:264px;width:64px;height:64px;border:2px solid #d9d9d9;border-radius:5px;background:#fff"></div>
<svg class="a" style="left:3140px;top:281px" width="29" height="30" viewBox="0 0 29 30"><path d="M1 6 H28 M9 6 V2 H20 V6 M5 6 L7 28 H22 L24 6" fill="none" stroke="#555" stroke-width="2.6" stroke-linejoin="round"/></svg>
<div class="a" style="left:3202px;top:264px;width:64px;height:64px;border:2px solid #d9d9d9;border-radius:5px;background:#fff"></div>
<svg class="a" style="left:3218px;top:280px" width="32" height="32" viewBox="0 0 32 32"><path d="M27 11 A13 13 0 1 0 28 19" fill="none" stroke="#555" stroke-width="2.6"/><path d="M29 3 L29 12 L20 11Z" fill="#555"/></svg>
<div class="a" style="left:1700px;top:346px;width:216px;height:64px;border:2px solid #d9d9d9;border-radius:5px;background:#fff"></div>
<div class="t" style="left:1730.5px;top:364.2px;font-size:28px;color:#505050;letter-spacing:0.6px;font-weight:normal;">Format json</div>
<div class="a" style="left:1932px;top:346px;width:308px;height:64px;border:2px solid #d9d9d9;border-radius:5px;background:#fff"></div>
<div class="t" style="left:1962.8px;top:364.2px;font-size:28px;color:#505050;letter-spacing:0.441px;font-weight:normal;">Delete json spaces</div>
<div class="a" style="left:1700px;top:426px;width:1610px;height:1134px;border:2px solid #e8e8e8;background:#fff"></div>
<div class="a" style="left:1838px;top:428px;width:1466px;height:42px;border:4px solid #eeeeee;border-right:none"></div>
<div class="a" style="left:3268px;top:428px;width:40px;height:1130px;border-left:1px solid #e3e3e3;background:#fff"></div>
<div class="a" style="left:3268px;top:428px;width:40px;height:4px;background:#555"></div>
<div class="a" style="left:3268px;top:432px;width:40px;height:756px;background:#c1c1c1"></div>
<div class="a" style="left:1839px;top:470px;width:2px;height:504px;background:#d3d3d3"></div>
<div class="a" style="left:1905px;top:512px;width:2px;height:420px;background:#d3d3d3"></div>
<div class="a" style="left:1972px;top:554px;width:2px;height:336px;background:#d3d3d3"></div>
<div class="a" style="left:2039px;top:596px;width:2px;height:84px;background:#d3d3d3"></div>
<div class="a" style="left:2039px;top:764px;width:2px;height:84px;background:#d3d3d3"></div>
<div class="t" style="left:1838px;top:435.1px;font-family:'Liberation Mono',monospace;font-size:28px;color:#3a3a3a;letter-spacing:-0.05px;-webkit-text-stroke:0">{</div>
<div class="t" style="left:1700px;width:84px;text-align:right;top:435.1px;font-family:'Liberation Mono',monospace;font-size:28px;color:#2f86a3;-webkit-text-stroke:0">1</div>
<div class="t" style="left:1838px;top:477.1px;font-family:'Liberation Mono',monospace;font-size:28px;color:#3a3a3a;letter-spacing:-0.05px;-webkit-text-stroke:0">    "animals": {</div>
<div class="t" style="left:1700px;width:84px;text-align:right;top:477.1px;font-family:'Liberation Mono',monospace;font-size:28px;color:#2f86a3;-webkit-text-stroke:0">2</div>
<div class="t" style="left:1838px;top:519.1px;font-family:'Liberation Mono',monospace;font-size:28px;color:#3a3a3a;letter-spacing:-0.05px;-webkit-text-stroke:0">        "dog": [</div>
<div class="t" style="left:1700px;width:84px;text-align:right;top:519.1px;font-family:'Liberation Mono',monospace;font-size:28px;color:#2f86a3;-webkit-text-stroke:0">3</div>
<div class="t" style="left:1838px;top:561.1px;font-family:'Liberation Mono',monospace;font-size:28px;color:#3a3a3a;letter-spacing:-0.05px;-webkit-text-stroke:0">            {</div>
<div class="t" style="left:1700px;width:84px;text-align:right;top:561.1px;font-family:'Liberation Mono',monospace;font-size:28px;color:#2f86a3;-webkit-text-stroke:0">4</div>
<div class="t" style="left:1838px;top:603.1px;font-family:'Liberation Mono',monospace;font-size:28px;color:#3a3a3a;letter-spacing:-0.05px;-webkit-text-stroke:0">                "name": "Rufus",</div>
<div class="t" style="left:1700px;width:84px;text-align:right;top:603.1px;font-family:'Liberation Mono',monospace;font-size:28px;color:#2f86a3;-webkit-text-stroke:0">5</div>
<div class="t" style="left:1838px;top:645.1px;font-family:'Liberation Mono',monospace;font-size:28px;color:#3a3a3a;letter-spacing:-0.05px;-webkit-text-stroke:0">                "age": 15</div>
<div class="t" style="left:1700px;width:84px;text-align:right;top:645.1px;font-family:'Liberation Mono',monospace;font-size:28px;color:#2f86a3;-webkit-text-stroke:0">6</div>
<div class="t" style="left:1838px;top:687.1px;font-family:'Liberation Mono',monospace;font-size:28px;color:#3a3a3a;letter-spacing:-0.05px;-webkit-text-stroke:0">            },</div>
<div class="t" style="left:1700px;width:84px;text-align:right;top:687.1px;font-family:'Liberation Mono',monospace;font-size:28px;color:#2f86a3;-webkit-text-stroke:0">7</div>
<div class="t" style="left:1838px;top:729.1px;font-family:'Liberation Mono',monospace;font-size:28px;color:#3a3a3a;letter-spacing:-0.05px;-webkit-text-stroke:0">            {</div>
<div class="t" style="left:1700px;width:84px;text-align:right;top:729.1px;font-family:'Liberation Mono',monospace;font-size:28px;color:#2f86a3;-webkit-text-stroke:0">8</div>
<div class="t" style="left:1838px;top:771.1px;font-family:'Liberation Mono',monospace;font-size:28px;color:#3a3a3a;letter-spacing:-0.05px;-webkit-text-stroke:0">                "name": "Marty",</div>
<div class="t" style="left:1700px;width:84px;text-align:right;top:771.1px;font-family:'Liberation Mono',monospace;font-size:28px;color:#2f86a3;-webkit-text-stroke:0">9</div>
<div class="t" style="left:1838px;top:813.1px;font-family:'Liberation Mono',monospace;font-size:28px;color:#3a3a3a;letter-spacing:-0.05px;-webkit-text-stroke:0">                "age": null</div>
<div class="t" style="left:1700px;width:84px;text-align:right;top:813.1px;font-family:'Liberation Mono',monospace;font-size:28px;color:#2f86a3;-webkit-text-stroke:0">10</div>
<div class="t" style="left:1838px;top:855.1px;font-family:'Liberation Mono',monospace;font-size:28px;color:#3a3a3a;letter-spacing:-0.05px;-webkit-text-stroke:0">            }</div>
<div class="t" style="left:1700px;width:84px;text-align:right;top:855.1px;font-family:'Liberation Mono',monospace;font-size:28px;color:#2f86a3;-webkit-text-stroke:0">11</div>
<div class="t" style="left:1838px;top:897.1px;font-family:'Liberation Mono',monospace;font-size:28px;color:#3a3a3a;letter-spacing:-0.05px;-webkit-text-stroke:0">        ]</div>
<div class="t" style="left:1700px;width:84px;text-align:right;top:897.1px;font-family:'Liberation Mono',monospace;font-size:28px;color:#2f86a3;-webkit-text-stroke:0">12</div>
<div class="t" style="left:1838px;top:939.1px;font-family:'Liberation Mono',monospace;font-size:28px;color:#3a3a3a;letter-spacing:-0.05px;-webkit-text-stroke:0">    }</div>
<div class="t" style="left:1700px;width:84px;text-align:right;top:939.1px;font-family:'Liberation Mono',monospace;font-size:28px;color:#2f86a3;-webkit-text-stroke:0">13</div>
<div class="t" style="left:1838px;top:981.1px;font-family:'Liberation Mono',monospace;font-size:28px;color:#3a3a3a;letter-spacing:-0.05px;-webkit-text-stroke:0">}</div>
<div class="t" style="left:1700px;width:84px;text-align:right;top:981.1px;font-family:'Liberation Mono',monospace;font-size:28px;color:#2f86a3;-webkit-text-stroke:0">14</div>
<div class="a" style="left:1700px;top:1624px;width:126px;height:64px;border:2px solid #d9d9d9;border-radius:5px;background:#fff"></div>
<div class="t" style="left:1731.0px;top:1642.4px;font-size:28px;color:#505050;letter-spacing:-0.5px;font-weight:normal;">Save</div>
<div class="a" style="left:1202px;top:136px;width:196px;height:208px;background:#fff;border-radius:5px;box-shadow:0 6px 24px rgba(0,0,0,0.15)"></div>
<div class="a" style="left:1202px;top:144px;width:196px;height:64px;background:#f5f5f5"></div>
<div class="t" style="left:1226.0px;top:162.3px;font-size:28px;color:#505050;letter-spacing:0.56px;font-weight:normal;">Close right</div>
<div class="t" style="left:1226.0px;top:226.3px;font-size:28px;color:#505050;letter-spacing:0.556px;font-weight:normal;">Close left</div>
<div class="t" style="left:1226.0px;top:290.3px;font-size:28px;color:#505050;letter-spacing:0.5px;font-weight:normal;">Close other</div>
<div class="a" style="left:0px;top:1886px;width:3352px;height:69px;background:linear-gradient(rgba(242,242,242,0),rgba(240,240,240,1));border-radius:90px 80px 0 0/66px 66px 0 0"></div>
<div class="a" style="left:720px;top:90px;width:10px;height:1865px;background:#cbcbcb"></div>
</body></html>
